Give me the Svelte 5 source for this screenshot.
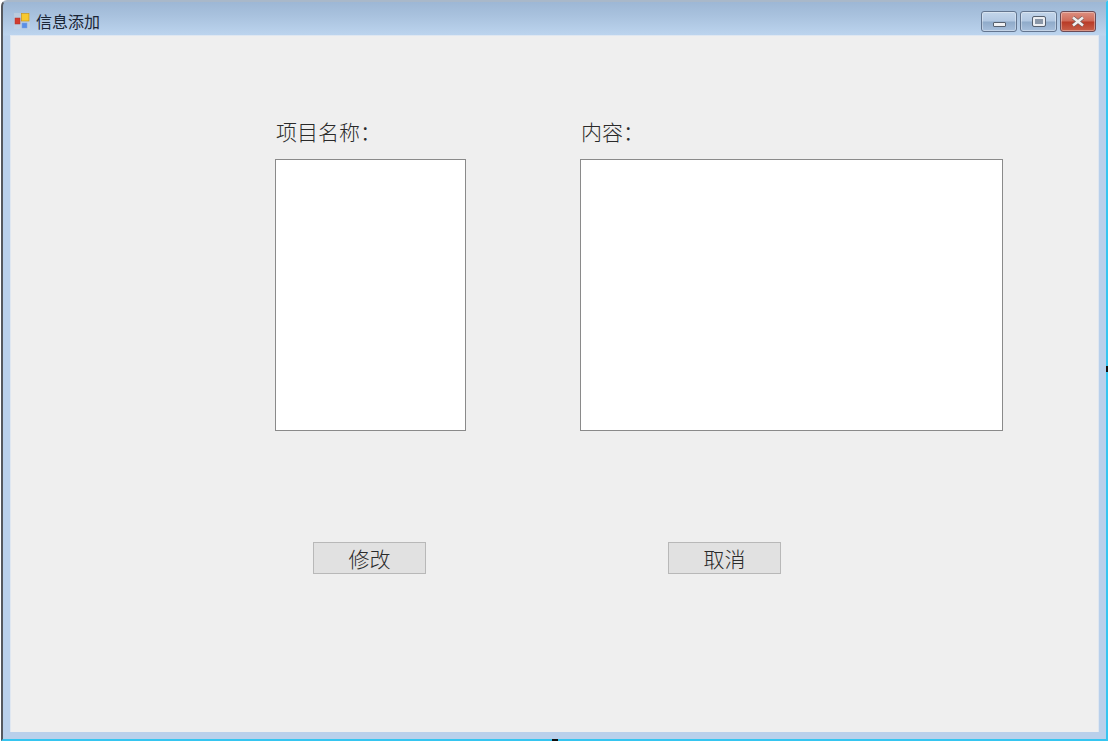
<script lang="ts">
  let name = $state('');
  let content = $state('');
</script>

<div class="window">
  <header class="titlebar">
    <svg class="app-icon" width="16" height="16" viewBox="0 0 16 16">
      <rect x="0" y="0" width="16" height="16" fill="#c9d3de" opacity="0.55" />
      <rect x="1" y="5" width="5" height="6" fill="#d23c2e" stroke="#a33" stroke-width="0.5" />
      <rect x="7.5" y="0.5" width="7.5" height="7.5" fill="#f7c92f" stroke="#c8951a" stroke-width="0.7" />
      <rect x="8" y="10" width="5" height="5" fill="#5b8fe6" stroke="#7aa5e8" stroke-width="0.5" />
    </svg>
    <span class="title">信息添加</span>
    <div class="controls">
      <button class="ctl" aria-label="最小化"><span class="min-glyph"></span></button>
      <button class="ctl wide" aria-label="最大化"><span class="max-glyph"></span></button>
      <button class="ctl close" aria-label="关闭">
        <svg width="16" height="11" viewBox="0 0 16 11">
          <path d="M3 1.5 L13 9.5 M13 1.5 L3 9.5" stroke="#6b5c5c" stroke-width="3.8" />
          <path d="M3 1.5 L13 9.5 M13 1.5 L3 9.5" stroke="#f2eeee" stroke-width="2.6" />
        </svg>
      </button>
    </div>
  </header>

  <main class="client">
    <div class="fields">
      <label class="field names">
        <span class="caption">项目名称：</span>
        <textarea bind:value={name}></textarea>
      </label>
      <label class="field body">
        <span class="caption">内容：</span>
        <textarea bind:value={content}></textarea>
      </label>
    </div>
    <div class="actions">
      <button class="action">修改</button>
      <button class="action cancel">取消</button>
    </div>
  </main>

  <!-- 边框上的小黑点 -->
  <span class="handle right"></span>
  <span class="handle bottom"></span>
</div>

<style>
  :global(body) {
    margin: 0;
    background: #fff;
  }

  .window {
    position: relative;
    width: 1107px;
    height: 741px;
    margin-left: 1px;
    box-sizing: border-box;
    display: flex;
    flex-direction: column;
    padding: 0 7px 7px 7px;
    background: #b9d0eb;
    border-top: 2px solid #a9b8c9;
    border-left: 2px solid #55585e;
    border-right: 2px solid #35c5f0;
    border-bottom: 2px solid #35c5f0;
    border-top-left-radius: 6px;
    font-family: "Noto Sans CJK SC", sans-serif;
    background-image: linear-gradient(180deg, #9db7d5 0, #a9c2de 14px, #bcd4ee 33px, #b9d0eb 34px);
    background-repeat: no-repeat;
  }

  .titlebar {
    height: 33px;
    flex: none;
    display: flex;
    align-items: center;
    box-sizing: border-box;
    padding: 5px 3px 0 4px;
  }

  .app-icon {
    flex: none;
  }

  .title {
    margin-left: 6px;
    font-size: 16px;
    color: #1a2535;
  }

  .controls {
    margin-left: auto;
    display: flex;
    gap: 3px;
  }

  .ctl {
    width: 36px;
    height: 21px;
    padding: 0;
    display: flex;
    align-items: center;
    justify-content: center;
    border: 1px solid #63758f;
    border-radius: 3px;
    background: linear-gradient(180deg, #c3d5ea 0, #b2c8e2 48%, #8faac9 52%, #a7bfdc 100%);
    box-shadow: inset 0 0 0 1px rgba(255, 255, 255, 0.35);
  }

  .ctl.wide {
    width: 37px;
  }

  .ctl.close {
    background: linear-gradient(180deg, #dc8f80 0, #cf6a58 48%, #b83a26 52%, #c9604a 100%);
    border-color: #6a4a55;
  }

  .min-glyph {
    width: 11px;
    height: 3px;
    margin-top: 7px;
    background: #f0f1f4;
    border: 1px solid #56606e;
    border-radius: 1px;
  }

  .max-glyph {
    width: 8px;
    height: 5px;
    background: #8a97a8;
    border: 2px solid #eceef2;
    outline: 1px solid #56606e;
    border-radius: 1px;
  }

  .client {
    flex: 1;
    background: #efefef;
    border-top: 1px solid #dfe7f1;
    border-left: 1px solid #dfe7f1;
    border-right: 1px solid #dfe7f1;
    box-sizing: border-box;
    padding-top: 85px;
    padding-left: 264px;
    color: #333;
  }

  .fields {
    display: flex;
    gap: 114px;
  }

  .field {
    display: flex;
    flex-direction: column;
  }

  .caption {
    height: 38px;
    font-size: 21px;
    line-height: 20px;
    padding-left: 1px;
    color: #2a2a2a;
    font-weight: 300;
    white-space: nowrap;
  }

  textarea {
    display: block;
    height: 272px;
    box-sizing: border-box;
    margin: 0;
    padding: 2px;
    resize: none;
    background: #fff;
    border: 1px solid #8a8a8a;
    outline: none;
  }

  .names textarea {
    width: 191px;
  }

  .body textarea {
    width: 423px;
  }

  .actions {
    display: flex;
    margin-top: 111px;
    padding-left: 38px;
    gap: 242px;
  }

  .action {
    width: 113px;
    height: 32px;
    padding: 0;
    background: #e1e1e1;
    border: 1px solid #b8b8b8;
    color: #2a2a2a;
    font-family: inherit;
    font-size: 21px;
    font-weight: 300;
    line-height: 24px;
  }

  .handle {
    position: absolute;
    background: #111;
  }

  .handle.right {
    right: -2px;
    top: 364px;
    width: 2px;
    height: 6px;
  }

  .handle.bottom {
    left: 549px;
    bottom: -2px;
    width: 6px;
    height: 2px;
  }
</style>
